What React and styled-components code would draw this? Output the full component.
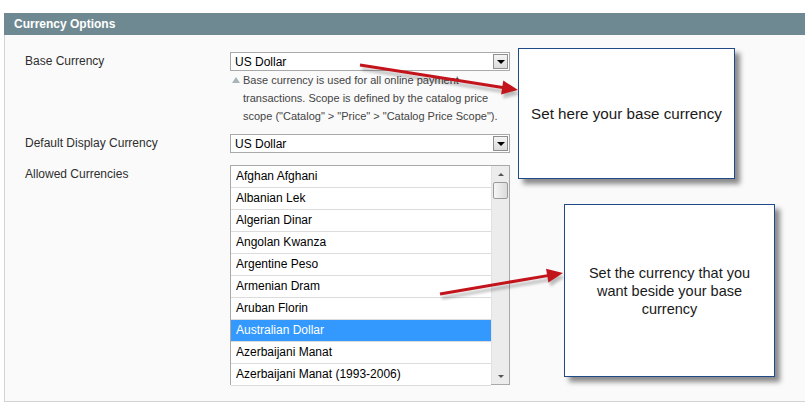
import React from "react";
import styled, { createGlobalStyle } from "styled-components";

const Global = createGlobalStyle`
  body {
    margin: 0;
    background: #fff;
    font-family: "Liberation Sans", Arial, sans-serif;
  }
`;

const Page = styled.div`
  position: relative;
  width: 805px;
  height: 408px;
  overflow: hidden;
`;

const Section = styled.div`
  margin: 13px 0 0 4px;
`;

const Head = styled.div`
  height: 22px;
  line-height: 22px;
  background: #6f8992;
  color: #fff;
  font-weight: bold;
  font-size: 12px;
  padding-left: 10px;
`;

const Body = styled.div`
  background: #fafafa;
  border-left: 1px solid #d3d3d3;
  border-bottom: 1px solid #d3d3d3;
  padding: 17px 0 16px 20px;
  display: grid;
  grid-template-columns: 205px 280px;
  row-gap: 9px;
`;

const Label = styled.div`
  font-size: 12px;
  color: #2e2e2e;
  line-height: 19px;
  padding-top: ${(p) => p.top || 0}px;
`;

const Field = styled.div`
  display: flex;
  flex-direction: column;
`;

const Select = styled.div`
  height: 17px;
  border: 1px solid #a9a9a9;
  background: #fff;
  display: flex;
  align-items: center;
  justify-content: space-between;
  padding-left: 4px;
  font-size: 12px;
  color: #000;
`;

const DropBtn = styled.div`
  width: 13px;
  height: 13px;
  margin-right: 1px;
  border: 1px solid #8f8f8f;
  background: linear-gradient(#f4f4f4, #dcdcdc);
  display: flex;
  align-items: center;
  justify-content: center;
  &::after {
    content: "";
    border-left: 4px solid transparent;
    border-right: 4px solid transparent;
    border-top: 4px solid #000;
  }
`;

const Note = styled.div`
  position: relative;
  padding-left: 13px;
  font-size: 11px;
  line-height: 18px;
  color: #444;
  &::before {
    content: "";
    position: absolute;
    left: 2px;
    top: 6px;
    border-left: 4px solid transparent;
    border-right: 4px solid transparent;
    border-bottom: 6px solid #a8b4bb;
  }
`;

const List = styled.div`
  margin-top: 3px;
  height: 218px;
  border: 1px solid #a9a9a9;
  background: #fff;
  display: flex;
`;

const Items = styled.div`
  flex: 1;
`;

const Item = styled.div`
  height: 21px;
  line-height: 21px;
  border-bottom: 1px solid #dcdcdc;
  padding-left: 5px;
  font-size: 12px;
  color: ${(p) => (p.sel ? "#fff" : "#000")};
  background: ${(p) => (p.sel ? "#3399ff" : "#fff")};
`;

const Scroll = styled.div`
  width: 17px;
  background: #ececec;
  border-left: 1px solid #e2e2e2;
  display: flex;
  flex-direction: column;
  align-items: center;
`;

const Arrow = styled.div`
  height: 16px;
  display: flex;
  align-items: center;
  justify-content: center;
  &::after {
    content: "";
    border-left: 3px solid transparent;
    border-right: 3px solid transparent;
    ${(p) => (p.down ? "border-top: 3px solid #555;" : "border-bottom: 3px solid #555;")}
  }
`;

const Thumb = styled.div`
  width: 13px;
  height: 15px;
  border: 1px solid #9a9a9a;
  border-radius: 2px;
  background: linear-gradient(90deg, #f6f6f6, #dadada);
`;

const Spacer = styled.div`
  flex: 1;
`;

const Callout = styled.div`
  position: absolute;
  left: ${(p) => p.x}px;
  top: ${(p) => p.y}px;
  width: ${(p) => p.w}px;
  height: ${(p) => p.h}px;
  background: #fff;
  border: 1px solid #1f4a87;
  box-shadow: 5px 5px 5px rgba(0, 0, 0, 0.45);
  display: flex;
  align-items: center;
  justify-content: center;
  text-align: center;
  font-size: ${(p) => p.fs}px;
  line-height: 18px;
  color: #1a1a1a;
  box-sizing: border-box;
  padding: 0 ${(p) => p.pad}px;
  white-space: ${(p) => (p.nowrap ? "nowrap" : "normal")};
`;

const Arrows = styled.svg`
  position: absolute;
  left: 0;
  top: 0;
  pointer-events: none;
`;

const currencies = [
  "Afghan Afghani",
  "Albanian Lek",
  "Algerian Dinar",
  "Angolan Kwanza",
  "Argentine Peso",
  "Armenian Dram",
  "Aruban Florin",
  "Australian Dollar",
  "Azerbaijani Manat",
  "Azerbaijani Manat (1993-2006)",
];

function RedArrow({ x1, y1, x2, y2 }) {
  const dx = x2 - x1;
  const dy = y2 - y1;
  const len = Math.hypot(dx, dy);
  const ux = dx / len;
  const uy = dy / len;
  const bx = x2 - ux * 16;
  const by = y2 - uy * 16;
  const px = -uy * 7;
  const py = ux * 7;
  const head = `${x2},${y2} ${bx + px},${by + py} ${bx - px},${by - py}`;
  return (
    <g>
      <g transform="translate(2,4)" opacity="0.25" filter="url(#blur)">
        <line x1={x1} y1={y1} x2={bx} y2={by} stroke="#000" strokeWidth="3" />
        <polygon points={head} fill="#000" />
      </g>
      <line x1={x1} y1={y1} x2={bx + ux * 2} y2={by + uy * 2} stroke="#c3141b" strokeWidth="3" />
      <polygon points={head} fill="#c3141b" />
    </g>
  );
}

export default function App() {
  return (
    <Page>
      <Global />
      <Section>
        <Head>Currency Options</Head>
        <Body>
          <Label>Base Currency</Label>
          <Field>
            <Select>
              US Dollar
              <DropBtn />
            </Select>
            <Note>
              Base currency is used for all online payment transactions. Scope is
              defined by the catalog price scope ("Catalog" &gt; "Price" &gt; "Catalog
              Price Scope").
            </Note>
          </Field>
          <Label>Default Display Currency</Label>
          <Select>
            US Dollar
            <DropBtn />
          </Select>
          <Label top={3}>Allowed Currencies</Label>
          <List>
            <Items>
              {currencies.map((c) => (
                <Item key={c} sel={c === "Australian Dollar"}>
                  {c}
                </Item>
              ))}
            </Items>
            <Scroll>
              <Arrow />
              <Thumb />
              <Spacer />
              <Arrow down />
            </Scroll>
          </List>
        </Body>
      </Section>

      <Arrows width="805" height="408">
        <defs>
          <filter id="blur">
            <feGaussianBlur stdDeviation="1.5" />
          </filter>
        </defs>
        <RedArrow x1={360} y1={65} x2={518} y2={90} />
        <RedArrow x1={440} y1={294} x2={563} y2={273} />
      </Arrows>

      <Callout x={518} y={48} w={217} h={131} fs={15.2} pad={0} nowrap>
        Set here your base currency
      </Callout>
      <Callout x={564} y={204} w={211} h={173} fs={14.5} pad={10}>
        Set the currency that you want beside your base currency
      </Callout>
    </Page>
  );
}
